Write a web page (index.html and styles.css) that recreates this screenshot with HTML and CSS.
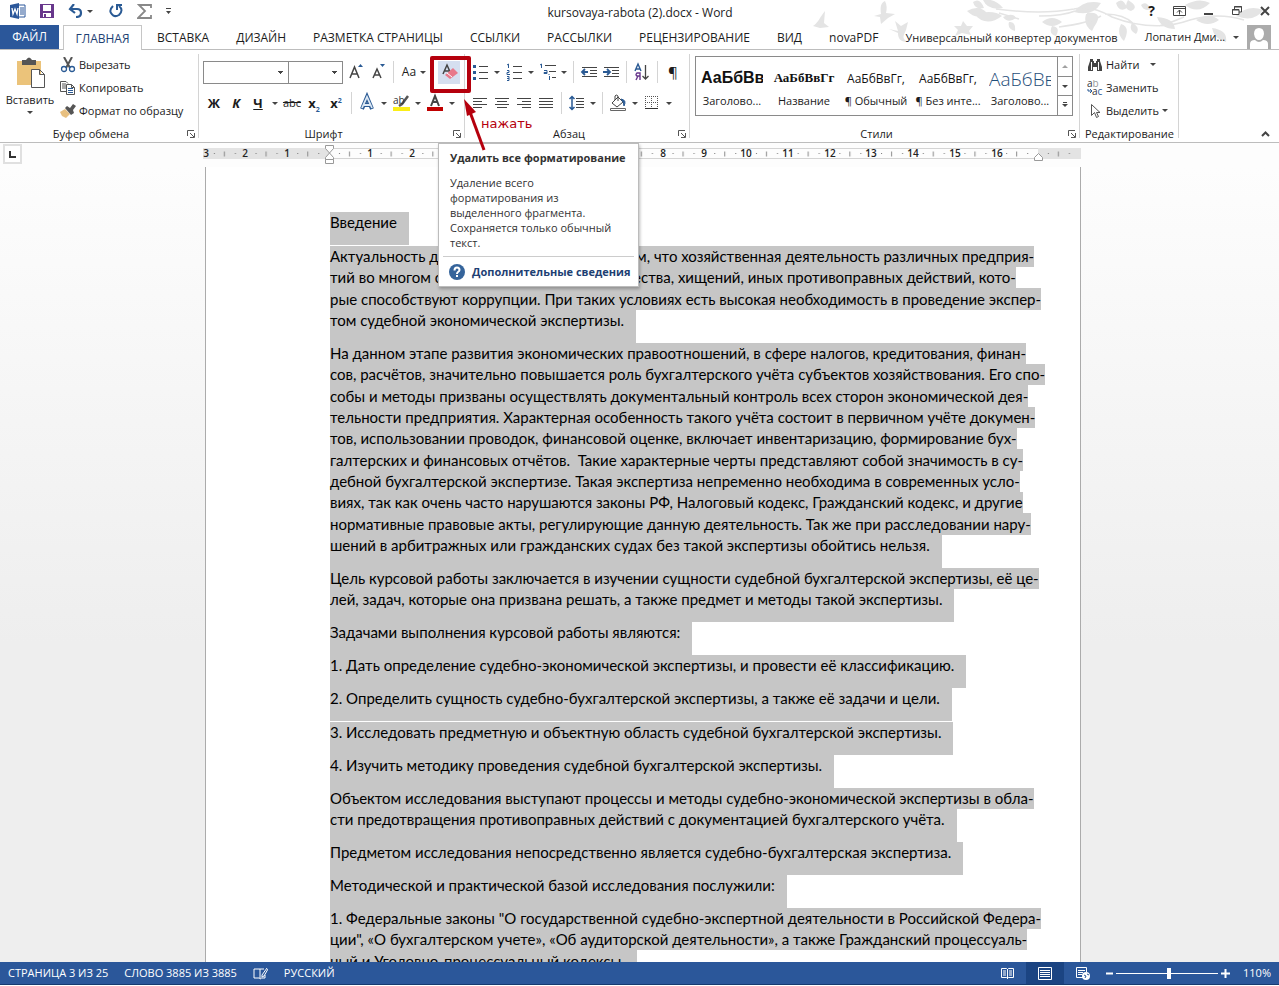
FILE: index.html
```html
<!DOCTYPE html>
<html lang="ru">
<head>
<meta charset="utf-8">
<title>kursovaya-rabota (2).docx - Word</title>
<link rel="stylesheet" href="styles.css">
</head>
<body>
<div class="app">
  <header class="titlebar">
    <svg class="foliage" width="520" height="49" viewBox="760 0 520 49" fill="#e4e4e4" aria-hidden="true">
      <path d="M814 26c5-3 7-9 12-15l-1 12 5 4-9 1zM875 16l7-2c-1-8 0-11 4-13 2 4 2 8 1 12l9 1-7 4-7 6-1-7zM890 29l9 2-3-10 6 5 7-4-2 8c-4 8-3 9 2 12-9 0-10-5-10-9zM955 26l7 0 2-5 4 5 6 0-4 5 2 4-9-2-7 3 3-6z"/>
      <path d="M968 11q12-7 20 2-10 8-20-2M975 14q20-5 28 2-16 12-28-2M974 2q7-5 11 6-9 2-11-6M984 0q12-2 20 8-15 3-20-8M1004 17q10-5 13 1-8 6-13-1M1010 22q7-1 6 9-8-2-6-9M1043 22q10-8 20 0-10 8-20 0M1075 12q10-13 27-9-8 14-27 9M1087 14q16-1 6 17-9-6-6-17M1053 26q9 1 4 10-8-2-4-10M1122 24q10 3 3 17-8-7-3-17M1117 3q7-7 11 5-8 5-11-5M1129 0q12 7 3 11-8-2-3-11M1088 13q18-2 7 14-9-4-7-14M1142 5q5-5 10 4-7 3-10-4M1133 23q9 4 4 11-8-4-4-11M1158 17q17 1 18 12-14 0-18-12M1186 5q14-8 25-2-12 12-25 2M1197 20q14-8 23 0-11 8-23 0M1213 28q16 2 14 14-12-3-14-14M1237 16q12-12 27-6-9 13-27 6M1249 27q12-5 20 2-11 7-20-2"/>
      <path d="M997 9q45 6 78 0 18-4 38 8 42 16 78 3 28-8 54 0M1000 13l20 6M1040 16q24 0 36-5M1106 14q19 0 29 10M1160 26q14-4 25-9M1060 27q30-4 42-11" fill="none" stroke="#e4e4e4" stroke-width="1.5"/>
    </svg>
    <div class="quick">
      <svg width="16" height="16"><path fill="#2b579a" d="M0 2l9-2v16l-9-2z"/><path d="M9 2h6v12H9M10 5h4M10 7h4M10 9h4M10 11h4" fill="none" stroke="#2b579a"/><path d="M2 5l1 6 2-5 2 5 1-6" fill="none" stroke="#fff" stroke-width="1.3"/></svg>
      <button class="plain save" aria-label="Сохранить"><svg width="14" height="14"><path fill="#68378c" d="M0 0h14v14H0z"/><path fill="#fff" d="M3 1h8v6H3zM3 9h8v4H6v-3H4v3H3z"/></svg></button>
      <button class="plain undo" aria-label="Отменить"><svg width="15" height="14"><path d="M2 5h7q4 0 4 4t-5 4M6 0L2 5l5 4" fill="none" stroke="#2a5a94" stroke-width="2.2"/></svg><i class="caret"></i></button>
      <button class="plain redo" aria-label="Повторить"><svg width="14" height="14"><path d="M4 2Q0 6 2 9q3 5 8 2 5-5 0-9M8 6V1h5" fill="none" stroke="#2a5a94" stroke-width="2"/></svg></button>
      <button class="plain sum" aria-label="Сумма"><svg width="16" height="15"><path d="M14 4V1H2l6 6-7 7h13v-3" fill="none" stroke="#888" stroke-width="1.8"/></svg></button>
      <button class="plain" aria-label="Настроить"><svg width="7" height="7"><path d="M1 0h5v1H1zM1 3h5L3.500 6z" fill="#444"/></svg></button>
    </div>
    <h1 class="title">kursovaya-rabota (2).docx - Word</h1>
    <div class="window">
      <button class="plain" aria-label="Справка"><b>?</b></button>
      <button class="plain" aria-label="Лента"><svg width="13" height="11"><path d="M.5.5h12v9H.5zM1 2.500h11M6.500 8.500V4M4 6.500L6.500 4 9 6.500" fill="none" stroke="#444"/></svg></button>
      <button class="plain" aria-label="Свернуть"><svg width="10" height="10"><path d="M0 7h9v2H0z" fill="#444"/></svg></button>
      <button class="plain" aria-label="Восстановить"><svg width="10" height="10"><path d="M2.500 3V.5h7V6H7M.5 3.500H7v5H.5zM0 4h7M2 1h8" fill="none" stroke="#444"/></svg></button>
      <button class="plain" aria-label="Закрыть"><svg width="10" height="10"><path d="M1 1l8 8M9 1L1 9" stroke="#444" stroke-width="2"/></svg></button>
    </div>
  </header>
  <nav class="tabs">
    <button class="file">ФАЙЛ</button>
    <button class="tab active">ГЛАВНАЯ</button>
    <button class="tab">ВСТАВКА</button>
    <button class="tab">ДИЗАЙН</button>
    <button class="tab">РАЗМЕТКА СТРАНИЦЫ</button>
    <button class="tab">ССЫЛКИ</button>
    <button class="tab">РАССЫЛКИ</button>
    <button class="tab">РЕЦЕНЗИРОВАНИЕ</button>
    <button class="tab">ВИД</button>
    <button class="tab">novaPDF</button>
    <button class="tab compact">Универсальный конвертер документов</button>
    <button class="account compact">Лопатин Дми... <i class="caret"></i><svg width="24" height="24"><path fill="#ababab" d="M0 0h24v24H0z"/><path fill="#fff" d="M12 3q5 0 5 6-1 6-5 6t-5-6q0-6 5-6M3 24v-5q0-4 5-4 4 4 8 0 5 0 5 4v5z"/></svg></button>
  </nav>

  <section class="ribbon">
    <div class="group clipboard">
      <div class="body">
        <button class="paste"><svg width="30" height="32"><path fill="#ebc37a" d="M2 4h24v24H2z"/><path fill="#555" d="M7 3h4q3-5 6 0h4v5H7z"/><path fill="#fff" stroke="#555" d="M16.500 12.500h8l5 5v13h-13zM24.500 12.500v5h5"/></svg><span>Вставить</span><i class="caret"></i></button>
        <div class="stack">
          <button class="cmd"><svg width="16" height="16"><path d="M4 0l6 11M12 0L6 11" stroke="#555" stroke-width="2"/><circle cx="4" cy="12" r="2.500" fill="none" stroke="#2a5a94" stroke-width="1.300"/><circle cx="12" cy="12" r="2.500" fill="none" stroke="#2a5a94" stroke-width="1.300"/></svg>Вырезать</button>
          <button class="cmd"><svg width="16" height="16"><path d="M6 11.500H.5v-10H6l2 2M2 4h4M2 6h4M2 8h4" fill="none" stroke="#555"/><path d="M6.500 4.500h5l3 3v7h-8zM11.500 4.500v3h3" fill="#fff" stroke="#555"/><path d="M8 8.500h5M8 10.500h5M8 12.500h5" stroke="#2a5a94"/></svg>Копировать</button>
          <button class="cmd"><svg width="16" height="16"><path fill="#e8c080" d="M0 9l5-3 5 5-4 4-4-2z"/><path fill="#555" d="M5 5l2-2 3 2 3-4 3 2-3 4 1 3-3 2z"/></svg>Формат по образцу</button>
        </div>
      </div>
      <div class="label">Буфер обмена</div><button class="launcher" aria-label="Буфер обмена"><svg width="8" height="8"><path d="M.5 6V.5H7M3 3l4 4M7.500 3v4.500H3" fill="none" stroke="#555"/></svg></button>
    </div>

    <div class="group font">
      <div class="body rows">
        <div class="row">
          <select class="face" aria-label="Шрифт"><option></option></select><select class="size" aria-label="Размер"><option></option></select>
          <button class="tool gap-l" aria-label="Увеличить"><svg width="22" height="22"><path d="M5 17L9.500 6 14 17M7 13h5" fill="none" stroke="#444" stroke-width="1.500"/><path d="M13 6h5l-2.500-3z" fill="#2a5a94"/></svg></button>
          <button class="tool" aria-label="Уменьшить"><svg width="22" height="22"><path d="M6 17l4-9 4 9M7 14h6" fill="none" stroke="#444" stroke-width="1.500"/><path d="M13 3h5l-2.500 3z" fill="#2a5a94"/></svg></button>
          <i class="sep"></i>
          <button class="tool wide">Аа<i class="caret"></i></button>
          <button class="tool erase" aria-label="Удалить все форматирование"><svg width="22" height="23"><path d="M5 13L9 4l4 9M7 10h5" fill="none" stroke="#444" stroke-width="1.500"/><path d="M15 7l5 5-8 6-5-4z" fill="#e8788a"/><path d="M9 12l5 4" stroke="#fff"/></svg></button>
        </div>
        <div class="row">
          <button class="tool"><b>Ж</b></button><button class="tool"><b><em>К</em></b></button><button class="tool"><b><u>Ч</u></b></button><button class="drop" aria-label="Подчёркивание"><i class="caret"></i></button>
          <button class="tool small"><s>abc</s></button><button class="tool"><b>x<sub>2</sub></b></button><button class="tool"><b>x<sup>2</sup></b></button>
          <i class="sep"></i>
          <button class="tool" aria-label="Эффекты"><svg width="22" height="22"><path d="M6 17L11 5l5 12M8 13h6" fill="none" stroke="#2a5a94" stroke-width="4"/><path d="M6 16L11 5l5 11M8 13h6" fill="none" stroke="#dce8f4" stroke-width="1.800"/></svg></button><button class="drop" aria-label="Виды эффектов"><i class="caret"></i></button>
          <button class="tool marker" aria-label="Цвет выделения"><svg width="22" height="22"><path fill="#fbee17" d="M3 15h17v4H3z"/><path d="M9 14l3-2 6-8" stroke="#555" stroke-width="2.500" fill="none"/><text x="3" y="12" class="glyph">ab</text></svg></button><button class="drop" aria-label="Маркеры"><i class="caret"></i></button>
          <button class="tool" aria-label="Цвет текста"><svg width="22" height="22"><path fill="#c00000" d="M3 15h16v4H3z"/><path d="M7 14l4-10 4 10M9 10h5" fill="none" stroke="#444" stroke-width="2"/></svg></button><button class="drop" aria-label="Цвета"><i class="caret"></i></button>
        </div>
      </div>
      <div class="label">Шрифт</div><button class="launcher" aria-label="Шрифт"><svg width="8" height="8"><path d="M.5 6V.5H7M3 3l4 4M7.500 3v4.500H3" fill="none" stroke="#555"/></svg></button>
    </div>

    <div class="group para">
      <div class="body rows">
        <div class="row">
          <button class="tool" aria-label="Маркеры"><svg width="22" height="22"><path d="M10 5.500h9M10 11.500h9M10 17.500h9" stroke="#444"/><path d="M4 4h3v3H4zM4 10h3v3H4zM4 16h3v3H4z" fill="#2a5a94"/></svg></button><button class="drop" aria-label="Виды маркеров"><i class="caret"></i></button>
          <button class="tool" aria-label="Нумерация"><svg width="22" height="22"><path d="M10 5.500h9M10 11.500h9M10 17.500h9" stroke="#444"/><path d="M4 4l1.500-1v4M4 9.500h2v2H4v2h3M4 15.500h2v4H4M4 17.500h2" fill="none" stroke="#2a5a94"/></svg></button><button class="drop" aria-label="Виды нумерации"><i class="caret"></i></button>
          <button class="tool" aria-label="Многоуровневый список"><svg width="22" height="22"><path d="M8 4.500h11M12 10.500h7M15 16.500h4" stroke="#444"/><path d="M3 4l1.500-1v4M7 9.500h3v3H7v-1h3M12 13v1M12.500 15v4" fill="none" stroke="#2a5a94"/></svg></button><button class="drop snug" aria-label="Виды списков"><i class="caret"></i></button>
          <i class="sep"></i>
          <button class="tool" aria-label="Уменьшить отступ"><svg width="22" height="22"><path d="M4 6.500h15M12 9.500h7M12 12.500h7M4 15.500h15" stroke="#444"/><path d="M10 11H4M7 8l-3 3 3 3" fill="none" stroke="#2a5a94" stroke-width="1.800"/></svg></button>
          <button class="tool" aria-label="Увеличить отступ"><svg width="22" height="22"><path d="M4 6.500h15M12 9.500h7M12 12.500h7M4 15.500h15" stroke="#444"/><path d="M3 11h6M7 8l3 3-3 3" fill="none" stroke="#2a5a94" stroke-width="1.800"/></svg></button>
          <i class="sep"></i>
          <button class="tool" aria-label="Сортировка"><svg width="22" height="22"><path d="M4 10l3-7 3 7M5 8h4" fill="none" stroke="#2a5a94" stroke-width="1.400"/><path d="M9 19v-7H6q-2 2 0 3h3M7 15l-2 4" fill="none" stroke="#68378c" stroke-width="1.400"/><path d="M14.500 4v14M11.500 15l3 3 3-3" fill="none" stroke="#444" stroke-width="1.300"/></svg></button>
          <i class="sep"></i>
          <button class="tool pilcrow" aria-label="Знаки">¶</button>
        </div>
        <div class="row">
          <button class="tool" aria-label="По левому краю"><svg width="22" height="22"><path d="M4 6.500h14M4 9.500h9M4 12.500h14M4 15.500h9" stroke="#444"/></svg></button>
          <button class="tool" aria-label="По центру"><svg width="22" height="22"><path d="M4 6.500h14M6 9.500h10M4 12.500h14M6 15.500h10" stroke="#444"/></svg></button>
          <button class="tool" aria-label="По правому краю"><svg width="22" height="22"><path d="M4 6.500h14M9 9.500h9M4 12.500h14M9 15.500h9" stroke="#444"/></svg></button>
          <button class="tool" aria-label="По ширине"><svg width="22" height="22"><path d="M4 6.500h14M4 9.500h14M4 12.500h14M4 15.500h14" stroke="#444"/></svg></button>
          <i class="sep"></i>
          <button class="tool" aria-label="Интервал"><svg width="22" height="22"><path d="M10 6.500h8M10 9.500h8M10 12.500h8M10 15.500h8" stroke="#444"/><path d="M6 5v12M3.500 7L6 4.500 8.500 7M3.500 15L6 17.500 8.500 15" fill="none" stroke="#2a5a94" stroke-width="1.500"/></svg></button><button class="drop snug" aria-label="Интервалы"><i class="caret"></i></button>
          <i class="sep"></i>
          <button class="tool" aria-label="Заливка"><svg width="22" height="22"><path d="M5 11l6-6 5 5-6 5zM8 8V4q1-2 3 0v5" fill="#fff" stroke="#444"/><path d="M14 7q6 1 3 7 0-4-3-7" fill="#2a5a94" stroke="#2a5a94"/><path d="M3.500 16.500h15v2h-15z" fill="#fff" stroke="#666"/></svg></button><button class="drop" aria-label="Цвета заливки"><i class="caret"></i></button>
          <button class="tool" aria-label="Границы"><svg width="22" height="22"><path d="M4 4.500h14M4 10.500h14M4.500 4v13M10.500 4v13M16.500 4v13" stroke="#555" stroke-dasharray="1 1"/><path d="M4 16.500h13" stroke="#333"/></svg></button><button class="drop" aria-label="Виды границ"><i class="caret"></i></button>
        </div>
      </div>
      <div class="label">Абзац</div><button class="launcher" aria-label="Абзац"><svg width="8" height="8"><path d="M.5 6V.5H7M3 3l4 4M7.500 3v4.500H3" fill="none" stroke="#555"/></svg></button>
    </div>

    <div class="group styles">
      <div class="body">
        <div class="gallery">
          <button class="style"><span class="sample arial">АаБбВвГг</span><span>Заголово...</span></button>
          <button class="style"><span class="sample serif">АаБбВвГг</span><span>Название</span></button>
          <button class="style"><span class="sample">АаБбВвГг,</span><span>¶ Обычный</span></button>
          <button class="style"><span class="sample">АаБбВвГг,</span><span>¶ Без инте...</span></button>
          <button class="style"><span class="sample light">АаБбВвГг</span><span>Заголово...</span></button>
          <div class="scroll"><button class="up" aria-label="Вверх"><i class="caret"></i></button><button aria-label="Вниз"><i class="caret"></i></button><button class="more" aria-label="Ещё"><i class="caret"></i></button></div>
        </div>
      </div>
      <div class="label">Стили</div><button class="launcher" aria-label="Стили"><svg width="8" height="8"><path d="M.5 6V.5H7M3 3l4 4M7.500 3v4.500H3" fill="none" stroke="#555"/></svg></button>
    </div>

    <div class="group editing">
      <div class="body stack">
        <button class="cmd"><svg width="16" height="16"><path fill="#444" d="M3 2h3v2h1v2h2V4h1V2h3v2l2 6v4h-5v-4H6v4H1v-4l2-6z"/><path d="M4.500 5v8M11.500 5v8" stroke="#fff"/></svg>Найти<i class="caret far"></i></button>
        <button class="cmd"><svg width="16" height="16"><text x="0" y="7" class="glyph">a<tspan fill="#999">b</tspan></text><text x="5" y="15" class="glyph">a<tspan fill="#2a5a94">c</tspan></text><path d="M1 9v2h3M3 9l2 2-2 2" fill="none" stroke="#2a5a94"/></svg>Заменить</button>
        <button class="cmd"><svg width="16" height="16"><path d="M4.500 1.500v11l3-3 2 5 2-1-2-4h3.500z" fill="#fff" stroke="#555"/></svg>Выделить<i class="caret"></i></button>
      </div>
      <div class="label">Редактирование</div>
    </div>
    <button class="plain collapse" aria-label="Свернуть ленту"><svg width="9" height="6"><path d="M1 5l3.500-3.500L8 5" fill="none" stroke="#444" stroke-width="2"/></svg></button>
  </section>

  <div class="rulerbar">
    <button class="tabstop" aria-label="Табуляция"><svg width="7" height="7"><path d="M1 0v6h6" fill="none" stroke="#333" stroke-width="2"/></svg></button>
    <svg class="ruler" width="878" height="20" viewBox="203 144 878 20">
      <defs><pattern id="ticks" x="329" y="148" width="41.700" height="12" patternUnits="userSpaceOnUse"><path d="M10 5.500h1M31 5.500h1" stroke="#777"/><path d="M20.500 3.500v5" stroke="#888"/></pattern></defs>
      <path fill="#e3e3e3" d="M203 148h126v11H203zM1038 148h43v11h-43z"/><path d="M329 148.500h709M329 158.500h709" stroke="#d4d4d4"/>
      <path fill="url(#ticks)" d="M208 148h872v11H208z"/>
      <g text-anchor="middle">
        <text x="206" y="157">3</text><text x="245" y="157">2</text><text x="287" y="157">1</text><text x="370" y="157">1</text><text x="412" y="157">2</text><text x="663" y="157">8</text><text x="704" y="157">9</text><text x="746" y="157">10</text><text x="788" y="157">11</text><text x="830" y="157">12</text><text x="871" y="157">13</text><text x="913" y="157">14</text><text x="955" y="157">15</text><text x="997" y="157">16</text>
      </g>
      <path fill="#fff" stroke="#999" d="M325.500 145.500h8v3l-4 4.500-4-4.500zM325.500 159.500v-2l4-4.500 4 4.500v2zM1034.500 160.500v-3l4-4 4 4v3z"/>
      <path fill="#fff" stroke="#999" d="M325.500 159.500h8v4h-8z"/>
    </svg>
  </div>

  <main class="canvas">
    <article class="sheet">
      <p class="spaced"><span>Введение</span></p>
      <p><span>Актуальность данной темы обусловлена &nbsp;тем, что хозяйственная деятельность различных предприя-</span><span>тий во многом образует условия мошенничества, хищений, иных противоправных действий, кото-</span><span>рые способствуют коррупции. При таких условиях есть высокая необходимость в проведение экспер-</span><span>том судебной экономической экспертизы.</span></p>
      <p><span>На данном этапе развития экономических правоотношений, в сфере налогов, кредитования, финан-</span><span>сов, расчётов, значительно повышается роль бухгалтерского учёта субъектов хозяйствования. Его спо-</span><span>собы и методы призваны осуществлять документальный контроль всех сторон экономической дея-</span><span>тельности предприятия. Характерная особенность такого учёта состоит в первичном учёте докумен-</span><span>тов, использовании проводок, финансовой оценке, включает инвентаризацию, формирование бух-</span><span>галтерских и финансовых отчётов.&nbsp; Такие характерные черты представляют собой значимость в су-</span><span>дебной бухгалтерской экспертизе. Такая экспертиза непременно необходима в современных усло-</span><span>виях, так как очень часто нарушаются законы РФ, Налоговый кодекс, Гражданский кодекс, и другие</span><span>нормативные правовые акты, регулирующие данную деятельность. Так же при расследовании нару-</span><span>шений в арбитражных или гражданских судах без такой экспертизы обойтись нельзя.</span></p>
      <p><span>Цель курсовой работы заключается в изучении сущности судебной бухгалтерской экспертизы, её це-</span><span>лей, задач, которые она призвана решать, а также предмет и методы такой экспертизы.</span></p>
      <p><span>Задачами выполнения курсовой работы являются:</span></p>
      <p><span>1. Дать определение судебно-экономической экспертизы, и провести её классификацию.</span></p>
      <p class="spaced"><span>2. Определить сущность судебно-бухгалтерской экспертизы, а также её задачи и цели.</span></p>
      <p><span>3. Исследовать предметную и объектную область судебной бухгалтерской экспертизы.</span></p>
      <p><span>4. Изучить методику проведения судебной бухгалтерской экспертизы.</span></p>
      <p><span>Объектом исследования выступают процессы и методы судебно-экономической экспертизы в обла-</span><span>сти предотвращения противоправных действий с документацией бухгалтерского учёта.</span></p>
      <p><span>Предметом исследования непосредственно является судебно-бухгалтерская экспертиза.</span></p>
      <p><span>Методической и практической базой исследования послужили:</span></p>
      <p><span>1. Федеральные законы "О государственной судебно-экспертной деятельности в Российской Федера-</span><span>ции", «О бухгалтерском учете», «Об аудиторской деятельности», а также Гражданский процессуаль-</span><span>ный и Уголовно-процессуальный кодексы.</span></p>
    </article>
  </main>

  <footer class="status">
    <span>СТРАНИЦА 3 ИЗ 25</span><span>СЛОВО 3885 ИЗ 3885</span>
    <svg width="15" height="13"><path d="M7 2H1v9h5l2 1M7 2v9M7 2h4M14 1L9 8v2l2-1 4-7M12 8v3H8" fill="none" stroke="#fff"/></svg>
    <span>РУССКИЙ</span>
    <div class="views">
      <button aria-label="Чтение"><svg width="13" height="13"><path d="M.5 1.500h5l1 1 1-1h5v9h-5l-1 1-1-1h-5zM6.500 2v10M2 4h3M2 6h3M2 8h3M8 4h3M8 6h3M8 8h3" fill="none" stroke="#fff"/></svg></button>
      <button class="on" aria-label="Разметка"><svg width="14" height="13"><path d="M.5.5h13v12H.5zM2 3.500h10M2 5.500h10M2 7.500h10M2 9.500h10" fill="none" stroke="#fff"/></svg></button>
      <button aria-label="Веб"><svg width="15" height="13"><path d="M7 10.500H.5V.5h10V5M2 3.500h7M2 5.500h5M2 7.500h4" fill="none" stroke="#fff"/><circle cx="10" cy="9" r="4" fill="#fff"/><path d="M8 8l2 1-1 2M11 7l2 1" stroke="#2b579a" fill="none"/></svg></button>
    </div>
    <div class="zoom"><button aria-label="Меньше"><svg width="7" height="7"><path d="M0 2.500h7v2H0z" fill="#fff"/></svg></button><input type="range" aria-label="Масштаб" min="0" max="100" value="52"><button aria-label="Больше"><svg width="9" height="9"><path d="M0 3.500h9v2H0zM3.500 0h2v9h-2z" fill="#fff"/></svg></button><output>110%</output></div>
  </footer>

  <aside class="tooltip" role="tooltip">
    <h2>Удалить все форматирование</h2>
    <p>Удаление всего форматирования из выделенного фрагмента. Сохраняется только обычный текст.</p>
    <a href="#more"><svg width="16" height="16"><circle cx="8" cy="8" r="8" fill="#35649b"/><path d="M5.500 6.500q0-3 2.500-3t2.500 2.500q0 1-1.500 2-1 .7-1 2M8 11v2" fill="none" stroke="#fff" stroke-width="2"/></svg>Дополнительные сведения</a>
  </aside>
  <div class="frame"></div>
  <svg class="arrow" width="26" height="56"><path d="M7 14l14 38" stroke="#b5000d" stroke-width="3"/><path d="M1 1l12 13-9 4z" fill="#b5000d"/></svg>
  <span class="callout">нажать</span>
</div>
</body>
</html>
```

FILE: styles.css
```css
* { box-sizing: border-box; }
body { margin: 0; font: 12px/16px "Open Sans", "Noto Sans", sans-serif; color: #1c1c1c; background: #fff; }
button { font: inherit; color: inherit; border: 0; padding: 0; background: none; display: inline-flex; align-items: center; justify-content: center; white-space: nowrap; flex: none; }
svg { display: block; flex: none; }
h1, h2, p { margin: 0; font: inherit; }

.app { position: relative; display: flex; flex-direction: column; height: 100vh; overflow: hidden; border-bottom: 1px solid #fff; }
.caret { border: 3px solid transparent; border-top-color: #444; border-bottom: 0; width: 6px; flex: none; }
.glyph { font-size: 10px; fill: #333; }

.titlebar { position: relative; display: flex; align-items: center; height: 25px; flex: none; }
.foliage { position: absolute; right: 0; top: 0; }
.quick { display: flex; align-items: center; flex: 1; padding: 0 0 3px 10px; }
.save { margin-left: 14px; }
.undo { margin-left: 14px; gap: 4px; }
.redo { margin-left: 16px; }
.sum { margin: 0 12px 0 14px; }
.window { position: relative; display: flex; align-items: center; justify-content: flex-end; gap: 18px; flex: 1; padding: 0 9px 3px 0; }
.window b { font-size: 14px; }

.tabs { display: flex; align-items: stretch; height: 25px; flex: none; border-bottom: 1px solid #bdbdbd; position: relative; }
.file { width: 59px; background: #2b579a; color: #fff; margin-right: 4px; }
.tab { padding: 2px 0 0; margin-right: 27px; }
.tab.active { width: 79px; margin-right: 15px; padding-top: 1px; border: 1px solid #c6c6c6; border-bottom: 0; background: #fff; margin-bottom: -1px; color: #1e3f73; }
.account { margin-left: auto; padding-right: 9px; gap: 8px; }
.compact { font-size: 11px; }

.ribbon { display: flex; height: 93px; flex: none; border-bottom: 1px solid #bdbdbd; position: relative; }
.group { position: relative; display: flex; flex-direction: column; }
.group::after { content: ""; position: absolute; right: 0; top: 4px; bottom: 4px; border-right: 1px solid #d4d4d4; }
.body { flex: 1; display: flex; }
.label { text-align: center; height: 16px; font-size: 11px; padding-right: 17px; }
.launcher { position: absolute; right: 4px; bottom: 4px; }
.clipboard { width: 199px; }
.paste { flex-direction: column; width: 60px; padding-top: 7px; justify-content: flex-start; gap: 3px; font-size: 11px; }
.stack { display: flex; flex-direction: column; align-items: flex-start; padding-top: 3px; }
.cmd { height: 23px; gap: 3px; font-size: 11px; }
.far { margin-left: 8px; }
.font { width: 266px; }
.para { width: 225px; }
.rows { flex-direction: column; padding: 7px 0 0 4px; gap: 1px; }
.row { display: flex; align-items: center; height: 30px; }
.tool { width: 22px; height: 23px; }
.tool b { font-size: 13px; }
.tool sub, .tool sup { font-size: 7px; line-height: 1px; color: #2a5a94; }
.small { font-size: 11px; }
.drop { width: 12px; height: 22px; }
.snug { width: 10px; }
.sep { width: 1px; height: 22px; background: #d4d4d4; margin: 0 4px; flex: none; }
.face, .size { appearance: none; height: 23px; border: 1px solid #8a8a8a; border-radius: 0; background: conic-gradient(from -45deg at 50% 100%, #444 90deg, transparent 0) right 5px center / 6px 3px no-repeat #fff; width: 86px; }
.size { width: 55px; margin-left: -1px; }
.wide { width: 32px; gap: 4px; }
.gap-l { margin-left: 2px; }
.erase { background: #d5dff0; margin-left: 8px; }
.pilcrow { font-size: 15px; }

.styles { width: 390px; }
.gallery { display: flex; margin: 6px 0 0 5px; height: 60px; width: 378px; border: 1px solid #8a8a8a; }
.style { width: 72px; flex-direction: column; justify-content: flex-start; gap: 1px; padding: 9px 5px 0; font-size: 11px; }
.sample { width: 62px; height: 26px; line-height: 26px; overflow: hidden; color: #111; font-size: 12px; }
.arial { font: bold 16px/24px "Liberation Sans", sans-serif; }
.serif { font: bold 13px/24px "Liberation Serif", serif; }
.light { font-size: 19px; font-weight: 300; color: #1f4e79; }
.scroll { display: flex; flex-direction: column; margin-left: auto; width: 15px; border-left: 1px solid #8a8a8a; }
.scroll button { flex: 1; }
.scroll button + button { border-top: 1px solid #8a8a8a; }
.up .caret { transform: rotate(180deg); opacity: .5; }
.more .caret { box-shadow: 0 -3px 0 -1px #444; }
.editing { width: 99px; }
.editing .body { padding-left: 7px; }
.editing .label { padding: 0; }
.collapse { margin: auto 9px 5px auto; }

.rulerbar { display: flex; height: 24px; flex: none; background: #fdfdfd; position: relative; justify-content: center; padding-left: 4px; }
.tabstop { position: absolute; left: 3px; top: 1px; width: 19px; height: 20px; border: 2px solid #e0e0e0; background: #fff; }
.ruler { margin-top: 1px; font: 600 10px "Open Sans", sans-serif; fill: #222; }

.canvas { flex: 1; min-height: 0; overflow: hidden; background: linear-gradient(#fdfdfd, #eee 60%); padding-left: 7px; }
.sheet { width: 876px; margin: 0 auto; min-height: 100%; padding: 45px 40px 0 124px; background: #fff; border: solid #ababab; border-width: 0 1px; font: 15px/21px Lato, "Open Sans", sans-serif; color: #000; }
.sheet span { display: block; width: fit-content; background: #c6c6c6; white-space: nowrap; }
.sheet span:nth-child(3n) { line-height: 22px; }
.sheet span:last-child { padding: 0 12px 12px 0; }
.spaced { margin-bottom: 1px; }

.status { display: flex; align-items: center; height: 23px; flex: none; background: #2b579a; border-bottom: 1px solid #173a70; color: #fff; padding: 0 8px; gap: 16px; font-size: 11px; }
.views { display: flex; align-self: stretch; margin-left: auto; }
.views button { width: 38px; }
.views .on { background: #1b4482; }
.zoom { display: flex; align-items: center; gap: 3px; margin-left: -12px; }
.zoom input { appearance: none; width: 102px; height: 12px; margin: 0; background: linear-gradient(#fff, #fff) center / 100% 1px no-repeat; }
.zoom input::-webkit-slider-thumb { appearance: none; width: 4px; height: 11px; background: #fff; }
.zoom output { margin-left: 10px; }

.tooltip { position: absolute; left: 438px; top: 143px; width: 201px; background: #fff; border: 1px solid #bcbcbc; box-shadow: 1px 2px 3px #0004; padding: 6px 4px 6px; color: #333; font-size: 11px; }
.tooltip h2 { font-weight: 700; padding: 0 7px; white-space: nowrap; }
.tooltip p { line-height: 15px; padding: 9px 20px 6px 7px; border-bottom: 1px solid #ccc; }
.tooltip a { display: flex; align-items: center; gap: 7px; padding: 7px 0 0 6px; font-weight: 700; color: #1e3f73; text-decoration: none; white-space: nowrap; }
.frame { position: absolute; left: 430px; top: 56px; width: 41px; height: 37px; border: 4px solid #b5000d; border-radius: 2px; }
.arrow { position: absolute; left: 463px; top: 98px; }
.callout { position: absolute; left: 481px; top: 116px; font: 13px/16px "DejaVu Sans", sans-serif; color: #b5000d; }
```
